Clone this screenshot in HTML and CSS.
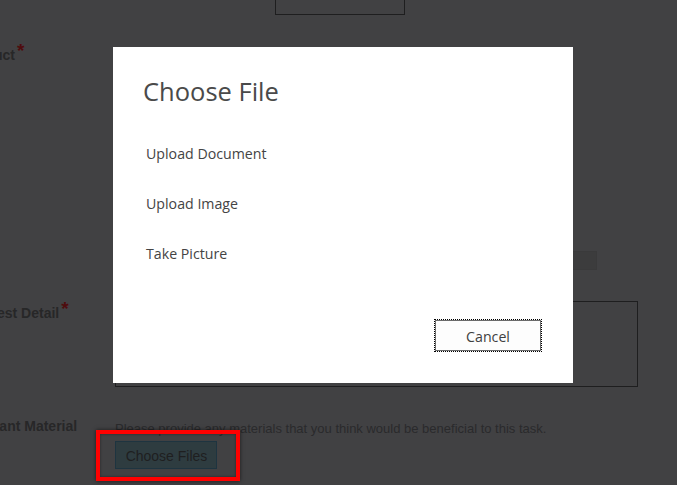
FILE: index.html
```html
<!DOCTYPE html>
<html>
<head>
<meta charset="utf-8">
<link rel="stylesheet" href="styles.css">
</head>
<body>
<div class="page">
  <div class="form">
    <div class="row row-top">
      <div class="label"></div>
      <div class="field"><div class="top-box"></div></div>
    </div>
    <div class="row row-product">
      <div class="label">Product<span class="req">*</span></div>
      <div class="field"><div class="list"></div><div class="text-input"></div></div>
    </div>
    <div class="row row-detail">
      <div class="label">Request Detail<span class="req">*</span></div>
      <div class="field"><div class="textarea"></div></div>
    </div>
    <div class="row row-material">
      <div class="label">Relevant Material</div>
      <div class="field">
        <div class="help">Please provide any materials that you think would be beneficial to this task.</div>
        <div class="upload">
          <button class="choose">Choose Files</button>
          <div class="highlight"></div>
        </div>
      </div>
    </div>
  </div>
</div>
<div class="modal">
  <h1 class="modal-title">Choose File</h1>
  <ul class="options">
    <li>Upload Document</li>
    <li>Upload Image</li>
    <li>Take Picture</li>
  </ul>
  <div class="footer"><button class="cancel">Cancel</button></div>
</div>
</body>
</html>
```

FILE: styles.css
```css
html, body {
  margin: 0;
  padding: 0;
  height: 100%;
}
body {
  background: #414143;
  overflow: hidden;
  position: relative;
  font-family: "Liberation Sans", Arial, sans-serif;
}
.form {
  margin-left: -38px;
  margin-top: -20px;
  display: flex;
  flex-direction: column;
}
.row {
  display: grid;
  grid-template-columns: 153px 560px;
}
.label {
  font-weight: bold;
  font-size: 14px;
  line-height: 16px;
  color: #272728;
  white-space: nowrap;
}
.req {
  color: #4f0c0e;
  font-size: 19px;
  line-height: 10px;
  position: relative;
  top: -3px;
  margin-left: 2px;
}
.top-box {
  margin-left: 160px;
  width: 128px;
  height: 33px;
  border: 1px solid #1e1e1f;
}
.row-product {
  margin-top: 32px;
}
.list {
  height: 204px;
}
.text-input {
  width: 480px;
  height: 17px;
  border: 1px solid #3a3a3b;
  background: #3c3c3d;
}
.row-detail {
  margin-top: 31px;
}
.row-detail .label {
  padding-top: 4px;
}
.textarea {
  width: 521px;
  height: 84px;
  border: 1px solid #1e1e1f;
}
.row-material {
  margin-top: 31px;
}
.help {
  font-size: 13px;
  line-height: 15px;
  color: #2a2a2c;
  margin-top: 3px;
  white-space: nowrap;
}
.upload {
  position: relative;
  margin-top: 5px;
  width: 102px;
}
.choose {
  display: block;
  width: 102px;
  height: 28px;
  margin: 0;
  padding: 0 0 0 1px;
  background: #2e3c40;
  border: 1px solid #1e3440;
  font-family: "Liberation Sans", Arial, sans-serif;
  font-size: 14px;
  line-height: 28px;
  color: #1f1f20;
}
.highlight {
  position: absolute;
  left: -19px;
  top: -11px;
  width: 136px;
  height: 43px;
  border: 4px solid #ff0000;
  box-shadow: 0 0 4px rgba(0, 0, 0, 0.6), inset 0 0 3px rgba(0, 0, 0, 0.4);
}
.modal {
  position: absolute;
  left: 113px;
  top: 47px;
  width: 460px;
  height: 336px;
  box-sizing: border-box;
  background: #ffffff;
  padding: 27px 31px 31px 30px;
  display: flex;
  flex-direction: column;
  font-family: "Open Sans", "Noto Sans", sans-serif;
  color: #444444;
}
.modal-title {
  margin: 0;
  font-size: 25.5px;
  font-weight: normal;
  line-height: 34px;
  color: #4a4a4a;
}
.options {
  list-style: none;
  margin: 21px 0 0 3px;
  padding: 0;
}
.options li {
  font-size: 14.2px;
  line-height: 50px;
  height: 50px;
  color: #444444;
}
.footer {
  margin-top: auto;
  display: flex;
  justify-content: flex-end;
}
.cancel {
  width: 108px;
  height: 33px;
  margin: 0;
  padding: 1px 0 0 0;
  background: #fdfdfd;
  border: 1px dotted #000000;
  box-shadow: inset 0 0 0 1px #6b6b6b;
  font-family: "Open Sans", "Noto Sans", sans-serif;
  font-size: 14.2px;
  color: #3f3f3f;
}
```
